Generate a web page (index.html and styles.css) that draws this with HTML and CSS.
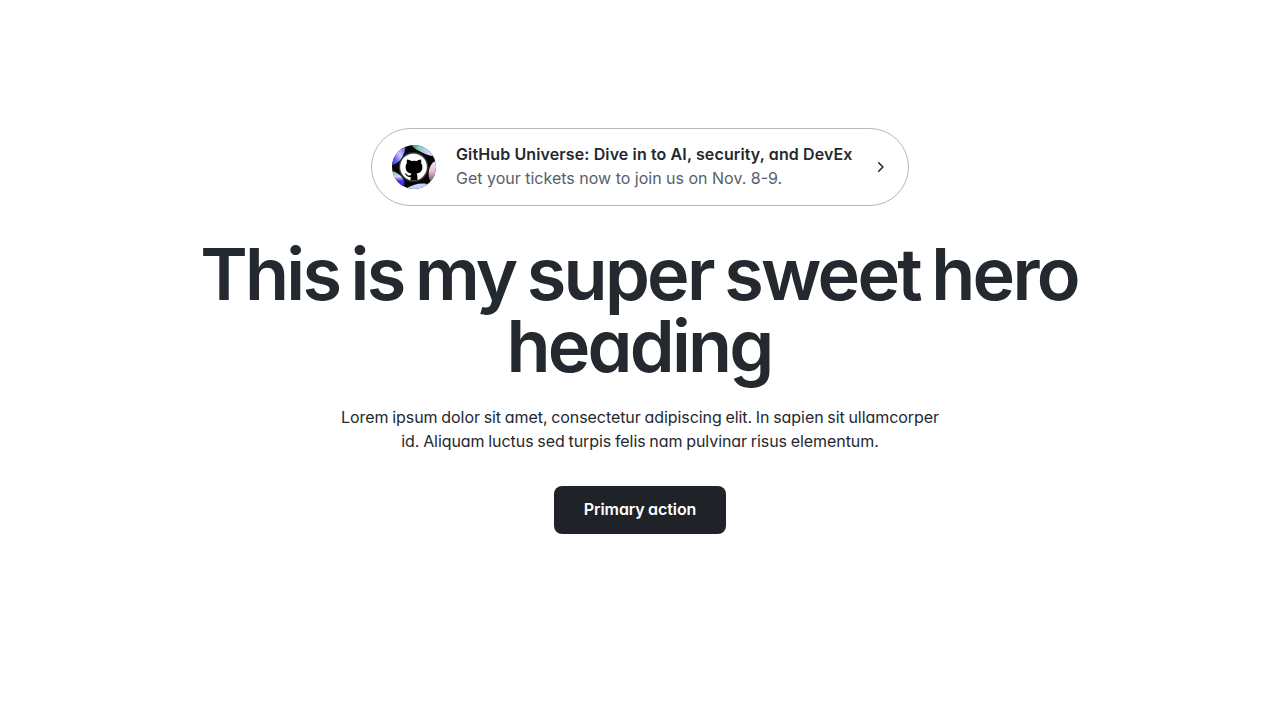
FILE: index.html
```html
<!DOCTYPE html>
<html lang="en">
<head>
<meta charset="utf-8">
<title>Hero</title>
<link rel="stylesheet" href="styles.css">
</head>
<body>
<main class="hero">
  <a class="announcement">
    <svg class="announcement-image" viewBox="0 0 44 44" aria-hidden="true">
      <defs>
        <clipPath id="disc"><circle cx="22" cy="22" r="22"/></clipPath>
        <linearGradient id="violet" x1="0" y1="1" x2="1" y2="0"><stop offset="0" stop-color="#3a2cf0"/><stop offset=".3" stop-color="#6a62ff"/><stop offset=".55" stop-color="#c9c6ff"/><stop offset="1" stop-color="#4a3cf0"/></linearGradient>
        <linearGradient id="aqua" x1="0" y1="0" x2="1" y2="0"><stop offset="0" stop-color="#2f8a50"/><stop offset=".25" stop-color="#7fc9b8"/><stop offset=".55" stop-color="#c3cdfa"/><stop offset="1" stop-color="#f2f0ff"/></linearGradient>
        <linearGradient id="pink" x1="0" y1="0" x2="0" y2="1"><stop offset="0" stop-color="#fdf0f6"/><stop offset=".55" stop-color="#e3bcd4"/><stop offset="1" stop-color="#7b548c"/></linearGradient>
        <linearGradient id="blue" x1="0" y1="0" x2="0" y2="1"><stop offset="0" stop-color="#63b67c"/><stop offset=".35" stop-color="#d6ddff"/><stop offset=".6" stop-color="#4a3cf5"/><stop offset="1" stop-color="#2a18c8"/></linearGradient>
        <radialGradient id="glow"><stop offset=".8" stop-color="#fff" stop-opacity=".5"/><stop offset="1" stop-color="#fff" stop-opacity="0"/></radialGradient>
      </defs>
      <g clip-path="url(#disc)">
        <path fill="#050507" d="M0 0h44v44H0z"/>
        <path fill="url(#violet)" d="M-1 20C4 20 8 16 10.500 11.500 12.500 8 13.500 4 13.500 1L8-2-2 8z"/>
        <path fill="url(#aqua)" d="M19-1c2 4 6 6 10 8 4.500 2.300 8.500 4 13 4L46 0z"/>
        <path fill="url(#pink)" d="M46 15c-5 1.500-8 5-9 10-.8 4.500-.3 8.500 1.500 11L48 33z"/>
        <path fill="url(#blue)" d="M1 26c4 1.500 7.500 4 9.500 7 1.700 2.500 2.500 5 1.500 7.500L4 42-3 28z"/>
        <path fill="#cbd3ff" d="M16 42.500c5-3 12-5 19-3.500l-4 7H17z"/>
        <circle cx="21.500" cy="22" r="15.500" fill="url(#glow)"/>
        <circle cx="21.500" cy="22" r="13.300" fill="#fff"/>
        <path fill="#000" d="M15.100 14.600c1.700 0 3.200.8 4.200 1.500a13 13 0 0 1 5.400 0c1-.7 2.500-1.500 4.200-1.500.6 1.600.4 3 .2 3.700.9 1 1.300 2.200 1.300 3.700 0 4.500-2.700 6.100-6 6.500.7.700 1 1.700 1 3v4.100h-6.800v-3.600c-3.500.5-4.200-1.800-5.100-2.600-.5-.5-1-.8-.6-1 1.800-.2 2.300 1.900 3.800 2.100.8.100 1.400 0 2-.3.100-.7.400-1.300.8-1.700-3.200-.4-5.900-2-5.900-6.500 0-1.500.5-2.700 1.300-3.700-.2-.7-.4-2.100.2-3.700z"/>
      </g>
    </svg>
    <span class="announcement-text">
      <strong class="announcement-title">GitHub Universe: Dive in to AI, security, and DevEx</strong>
      <span class="announcement-detail">Get your tickets now to join us on Nov. 8-9.</span>
    </span>
    <svg class="announcement-arrow" viewBox="0 0 16 16" aria-hidden="true"><path d="M6.700 3.800 10.900 8l-4.200 4.200" fill="none" stroke="#24292f" stroke-width="1.600" stroke-linecap="round" stroke-linejoin="round"/></svg>
  </a>
  <h1 class="heading">This is my super sweet hero<br>heading</h1>
  <p class="description">Lorem ipsum dolor sit amet, consectetur adipiscing elit. In sapien sit ullamcorper<br>id. Aliquam luctus sed turpis felis nam pulvinar risus elementum.</p>
  <a class="button">Primary action</a>
</main>
</body>
</html>
```
FILE: styles.css
```css
body {
  margin: 0;
  background: #fff;
  color: #24292f;
  font-family: Inter, "Liberation Sans", sans-serif;
  font-feature-settings: "cv11";
  font-size: 16px;
  line-height: 24px;
}
.hero {
  display: flex;
  flex-direction: column;
  align-items: center;
  padding-top: 128px;
  text-align: center;
  white-space: nowrap;
}
.announcement {
  box-sizing: border-box;
  display: flex;
  align-items: center;
  width: 538px;
  height: 78px;
  padding: 0 20px;
  border: 1px solid #afb8c1;
  border-radius: 40px;
  text-align: left;
}
.announcement-image {
  width: 44px;
  height: 44px;
  margin-right: 20px;
}
.announcement-text {
  display: flex;
  flex-direction: column;
  flex: 1;
  padding-bottom: 2px;
}
.announcement-title {
  font-weight: 600;
  letter-spacing: 0.12px;
}
.announcement-detail {
  color: #57606a;
}
.announcement-arrow {
  width: 16px;
  height: 16px;
}
.heading {
  margin: 32px 0 23px;
  padding-right: 2px;
  font-size: 72px;
  font-weight: 600;
  line-height: 72px;
  letter-spacing: -2.75px;
  word-spacing: -4px;
}
.description {
  margin: 0 0 33px;
  letter-spacing: -0.07px;
  word-spacing: -0.63px;
}
.button {
  box-sizing: border-box;
  display: flex;
  align-items: center;
  justify-content: center;
  width: 172px;
  height: 48px;
  padding-bottom: 2px;
  border-radius: 8px;
  background: #1f2328;
  color: #fff;
  font-weight: 600;
  letter-spacing: -0.06px;
  word-spacing: -0.7px;
}
```
